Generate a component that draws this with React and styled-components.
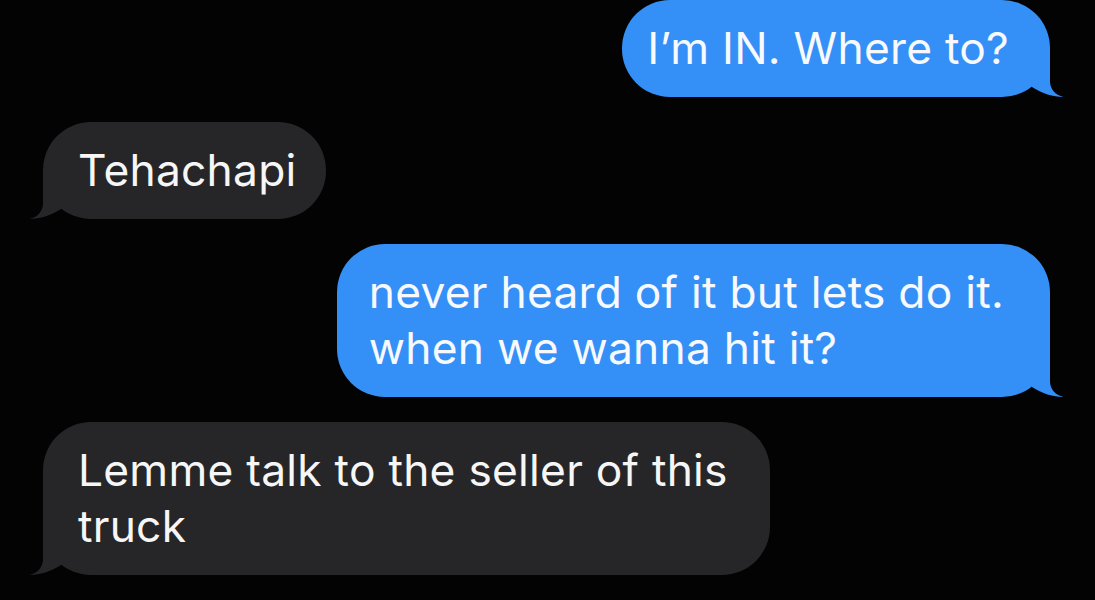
import React from "react";
import styled, { createGlobalStyle, css } from "styled-components";

const GlobalStyle = createGlobalStyle`
  html, body {
    margin: 0;
    padding: 0;
    background: #030304;
  }
  body {
    font-family: Inter, "Noto Sans", "Liberation Sans", sans-serif;
    -webkit-font-smoothing: antialiased;
  }
`;

const Thread = styled.div`
  width: 1095px;
  height: 600px;
  box-sizing: border-box;
  padding: 0 45px 0 43px;
  display: flex;
  flex-direction: column;
  gap: 25px;
  overflow: hidden;
  background: #030304;
`;

const Bubble = styled.div`
  position: relative;
  box-sizing: border-box;
  width: fit-content;
  padding: 20px 0 21px;
  border-radius: 48px;
  font-size: 44.3px;
  letter-spacing: 0.25px;
  line-height: 56px;
  font-weight: 400;
  white-space: pre-line;
  ${({ $sent }) =>
    $sent
      ? css`
          align-self: flex-end;
          background: #3490f6;
          color: #f7f9fc;
          padding-left: ${({ $pl }) => $pl ?? 25}px;
          padding-right: ${({ $pr }) => $pr ?? 41}px;
        `
      : css`
          align-self: flex-start;
          background: #262629;
          color: #f6f6f6;
          padding-left: ${({ $pl }) => $pl ?? 35}px;
          padding-right: ${({ $pr }) => $pr ?? 29}px;
        `}
`;

const TailSvg = styled.svg`
  position: absolute;
  bottom: 0;
  width: 45px;
  height: 50px;
  overflow: visible;
  ${({ $sent }) =>
    $sent
      ? css`
          right: -15px;
        `
      : css`
          left: -15px;
          transform: scaleX(-1);
        `}
`;

function Tail({ sent }) {
  return (
    <TailSvg $sent={sent} viewBox="0 0 45 50" aria-hidden="true">
      <path
        d="M12 0 L30 0 L30 34 C30 42 35 48 43.5 50 C33 50 22 46.5 12 40 Z"
        fill={sent ? "#3490f6" : "#262629"}
      />
    </TailSvg>
  );
}

function Message({ sent, children, pl, pr }) {
  return (
    <Bubble $sent={sent} $pl={pl} $pr={pr}>
      {children}
      <Tail sent={sent} />
    </Bubble>
  );
}

export default function App() {
  return (
    <>
      <GlobalStyle />
      <Thread>
        <Message sent>I’m IN. Where to?</Message>
        <Message>Tehachapi</Message>
        <Message sent pl={32} pr={46}>
          {"never heard of it but lets do it.\nwhen we wanna hit it?"}
        </Message>
        <Message pl={35} pr={42}>
          {"Lemme talk to the seller of this\ntruck"}
        </Message>
      </Thread>
    </>
  );
}
